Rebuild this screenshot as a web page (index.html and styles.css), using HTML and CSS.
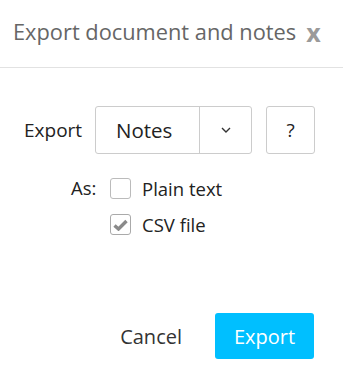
FILE: index.html
```html
<!DOCTYPE html>
<html>
<head>
<meta charset="utf-8">
<link rel="stylesheet" href="styles.css">
</head>
<body>
<div class="dialog">
  <div class="header">
    <span class="title">Export document and notes</span>
    <span class="close">x</span>
  </div>
  <div class="body">
    <div class="export-row">
      <span class="label">Export</span>
      <div class="select">
        <span class="select-value">Notes</span>
        <span class="select-arrow">
          <svg width="10" height="6" viewBox="0 0 10 6"><path d="M1 1 L5 5 L9 1" fill="none" stroke="#333" stroke-width="1.4"/></svg>
        </span>
      </div>
      <div class="help">?</div>
    </div>
    <div class="as-row">
      <span class="as-label">As:</span>
      <div class="options">
        <label class="option"><span class="box"></span><span>Plain text</span></label>
        <label class="option"><span class="box checked">
          <svg width="15" height="12" viewBox="0 0 15 12"><path d="M1.5 6.5 L5.5 10 L13.5 2" fill="none" stroke="#8a8a8a" stroke-width="3.4"/></svg>
        </span><span>CSV file</span></label>
      </div>
    </div>
  </div>
  <div class="footer">
    <span class="cancel">Cancel</span>
    <span class="export-btn">Export</span>
  </div>
</div>
</body>
</html>
```
FILE: styles.css
```css
html, body {
  margin: 0;
  padding: 0;
  background: #fff;
}
body {
  font-family: "Open Sans", "Noto Sans", sans-serif;
  color: #222;
}
.dialog {
  width: 343px;
}
.header {
  display: flex;
  align-items: center;
  height: 68px;
  padding-left: 13px;
  border-bottom: 1px solid #e2e2e2;
  box-sizing: border-box;
}
.title {
  font-size: 21.8px;
  color: #666;
  line-height: 26px;
  margin-top: -4px;
}
.close {
  font-size: 25px;
  font-weight: 700;
  color: #9a9a9a;
  margin-left: 10px;
  line-height: 26px;
  margin-top: -4px;
}
.body {
  padding-top: 38px;
  padding-left: 24px;
}
.export-row {
  display: flex;
  align-items: center;
}
.label {
  font-size: 19px;
  width: 71px;
}
.select {
  display: flex;
  width: 157px;
  height: 48px;
  box-sizing: border-box;
  border: 1px solid #ccc;
  border-radius: 3px;
}
.select-value {
  width: 104px;
  box-sizing: border-box;
  padding-left: 20px;
  display: flex;
  align-items: center;
  font-size: 20.5px;
  border-right: 1px solid #ccc;
}
.select-arrow {
  flex: 1;
  display: flex;
  align-items: center;
  justify-content: center;
}
.help {
  margin-left: 14px;
  width: 49px;
  height: 48px;
  box-sizing: border-box;
  border: 1px solid #ccc;
  border-radius: 3px;
  display: flex;
  align-items: center;
  justify-content: center;
  font-size: 19px;
}
.as-row {
  display: flex;
  margin-top: 24px;
  padding-left: 47px;
}
.as-label {
  font-size: 18.5px;
  width: 39px;
  line-height: 20px;
}
.options {
  display: flex;
  flex-direction: column;
  gap: 15px;
}
.option {
  display: flex;
  align-items: center;
  font-size: 18.5px;
  line-height: 21px;
}
.box {
  width: 21px;
  height: 21px;
  box-sizing: border-box;
  border: 1px solid #bbb;
  border-radius: 3px;
  margin-right: 11px;
  display: flex;
  align-items: center;
  justify-content: center;
}
.box.checked {
  border-color: #aaa;
}
.footer {
  display: flex;
  justify-content: flex-end;
  align-items: center;
  margin-top: 78px;
  padding-right: 29px;
}
.cancel {
  font-size: 20px;
  color: #333;
  margin-right: 33px;
}
.export-btn {
  width: 99px;
  height: 46px;
  background: #00bfff;
  border-radius: 3px;
  color: #fff;
  font-size: 20px;
  display: flex;
  align-items: center;
  justify-content: center;
}
```
